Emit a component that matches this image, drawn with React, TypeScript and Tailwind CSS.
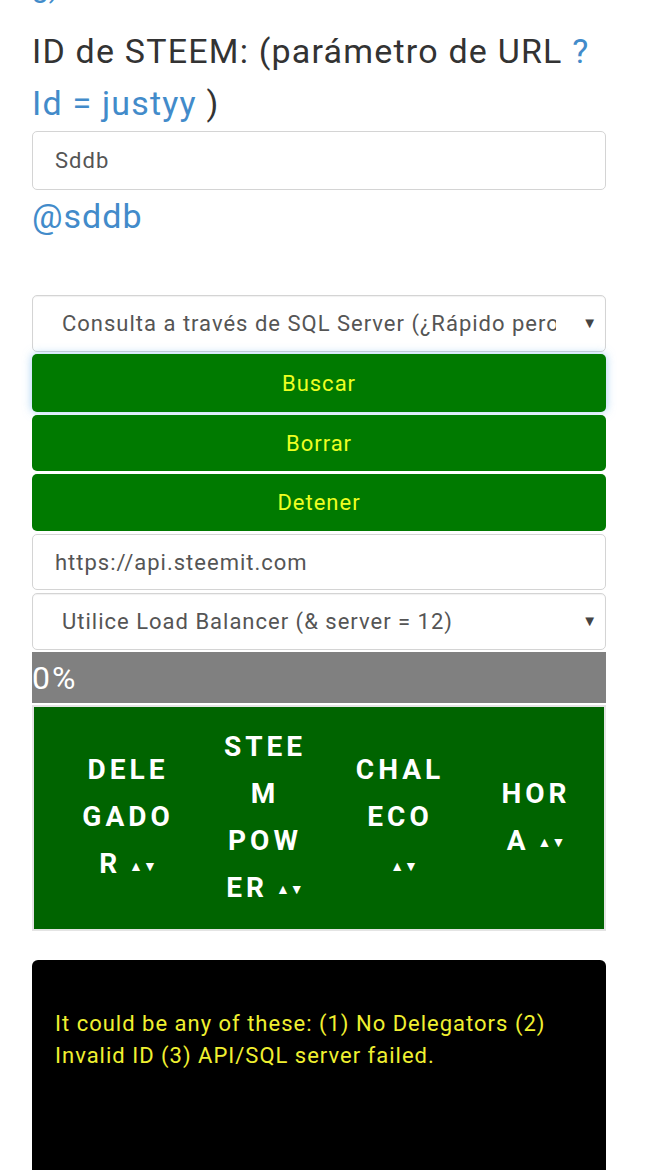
import React from "react";

const columns: { lines: string[]; col: string }[] = [
  { lines: ["DELE", "GADO", "R"], col: "DELEGADOR" },
  { lines: ["STEE", "M", "POW", "ER"], col: "STEEM POWER" },
  { lines: ["CHAL", "ECO", ""], col: "CHALECO" },
  { lines: ["HOR", "A"], col: "HORA" },
];

function SortArrows() {
  return (
    <span className="ml-[8px] inline-flex items-center text-[14px] tracking-normal align-middle">
      ▲▼
    </span>
  );
}

function Select({ label }: { label: string }) {
  return (
    <div className="flex h-full items-center rounded-[5px] border border-[#d4d4d4] bg-white pl-[29px] pr-[8px] shadow-[inset_0_1px_1px_rgba(0,0,0,0.06)]">
      <span className="w-[494px] overflow-hidden whitespace-nowrap text-[22px] tracking-[1px] text-[#555]">
        {label}
      </span>
      <span className="ml-auto text-[15px] text-[#444]">▼</span>
    </div>
  );
}

export default function App() {
  return (
    <div className="min-h-[1170px] w-[654px] overflow-hidden bg-white font-['Roboto','Liberation_Sans',sans-serif]">
      <div className="ml-[32px] w-[574px]">
        <div className="h-[6px] overflow-hidden">
          <div className="-mt-[30px] text-[30px] leading-[34px] text-[#428bca]">g)</div>
        </div>

        <h2 className="mt-[19px] text-[34px] leading-[52px] font-normal tracking-[1.2px] text-[#333]">
          ID de STEEM: (parámetro de URL <span className="text-[#428bca]">?</span>
          <br />
          <span className="text-[#428bca]">Id = justyy</span> )
        </h2>

        <div className="mt-[2px] flex h-[59px] items-center rounded-[5px] border border-[#d4d4d4] px-[22px] text-[22px] tracking-[1px] text-[#555]">
          Sddb
        </div>

        <div className="mt-[6px] text-[34px] leading-[40px] tracking-[1px] text-[#428bca]">@sddb</div>

        <div className="mt-[59px] h-[57px]">
          <Select label="Consulta a través de SQL Server (¿Rápido pero no en tiempo real?)" />
        </div>

        <button className="mt-[2px] flex h-[58px] w-full items-center justify-center rounded-[5px] bg-[#007a00] text-[22px] tracking-[1px] text-[#eeff22] shadow-[0_0_10px_rgba(102,175,233,0.6)]">
          Buscar
        </button>
        <button className="mt-[3px] flex h-[56px] w-full items-center justify-center rounded-[5px] bg-[#007a00] text-[22px] tracking-[1px] text-[#eeff22]">
          Borrar
        </button>
        <button className="mt-[3px] flex h-[57px] w-full items-center justify-center rounded-[5px] bg-[#007a00] text-[22px] tracking-[1px] text-[#eeff22]">
          Detener
        </button>

        <div className="mt-[3px] flex h-[56px] items-center rounded-[5px] border border-[#d4d4d4] px-[22px] text-[22px] tracking-[1px] text-[#555]">
          https://api.steemit.com
        </div>

        <div className="mt-[3px] h-[57px]">
          <Select label="Utilice Load Balancer (& server = 12)" />
        </div>

        <div className="mt-[2px] flex h-[51px] items-center bg-[#808080] text-[32px] tracking-[2px] text-white">
          0%
        </div>

        <div className="mt-[2px] h-[226px] border-2 border-[#e4e4e4] bg-[#006400]">
          <div className="grid h-full grid-cols-[188px_86px_184px_88px] items-center text-center text-[28px] leading-[47px] font-bold tracking-[4px] text-white">
            {columns.map((c) => (
              <div key={c.col} className="whitespace-nowrap">
                {c.lines.map((line, i) => (
                  <div key={i}>
                    {line}
                    {i === c.lines.length - 1 && <SortArrows />}
                  </div>
                ))}
              </div>
            ))}
          </div>
        </div>

        <div className="mt-[29px] h-[220px] rounded-t-[6px] bg-black px-[23px] pt-[48px] text-[22px] leading-[32px] tracking-[1px] text-[#f0f030]">
          It could be any of these: (1) No Delegators (2)
          <br />
          Invalid ID (3) API/SQL server failed.
        </div>
      </div>
    </div>
  );
}
